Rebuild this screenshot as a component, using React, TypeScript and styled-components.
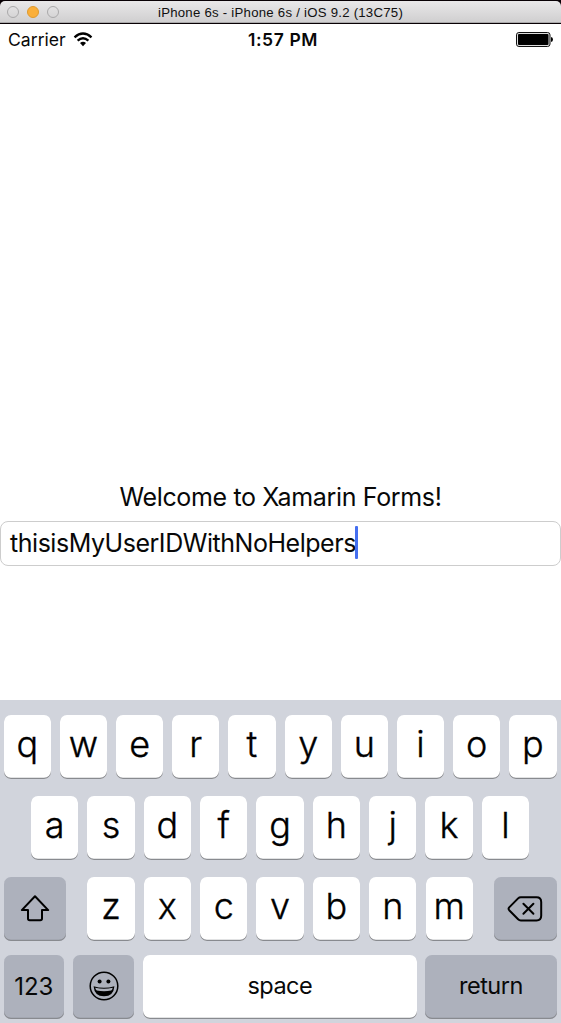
import React from 'react';
import styled, { createGlobalStyle } from 'styled-components';

const GlobalStyle = createGlobalStyle`
  * { box-sizing: border-box; }
  body { margin: 0; background: #fff; overflow: hidden; }
`;

const Simulator = styled.div`
  width: 561px;
  height: 1023px;
  display: flex;
  flex-direction: column;
  background: #fff;
  color: #080808;
  font-family: Inter, 'Liberation Sans', sans-serif;
  white-space: nowrap;
`;

const TitleFrame = styled.header`
  height: 24px;
  background: #080004;
  padding: 1px 0;
`;

const TitleBar = styled.div`
  height: 22px;
  display: grid;
  grid-template-columns: 60px 1fr 60px;
  align-items: center;
  border-radius: 5px 5px 0 0;
  background: linear-gradient(#e9e8e9, #d0cfd0);
  border-bottom: 1px solid #aaa9aa;
`;

const Lights = styled.div`
  display: flex;
  gap: 8px;
  padding-left: 7px;
`;

const Light = styled.span<{ $on?: boolean }>`
  flex: none;
  width: 12px;
  height: 12px;
  border-radius: 50%;
  border: 1px solid ${(p) => (p.$on ? '#df9a2e' : '#aaa9aa')};
  background: ${(p) => (p.$on ? '#faaf3a' : 'transparent')};
`;

const WindowTitle = styled.span`
  text-align: center;
  font-family: 'Liberation Sans', sans-serif;
  font-size: 13.2px;
  line-height: 21px;
  letter-spacing: 0.25px;
  padding-top: 1px;
  color: #101010;
`;

const StatusBar = styled.div`
  height: 32px;
  display: grid;
  grid-template-columns: 1fr auto 1fr;
  align-items: center;
  padding: 0 8px;
`;

const Network = styled.div`
  display: flex;
  align-items: center;
  gap: 7px;
  font-size: 17.6px;
`;

const Carrier = styled.span`
  line-height: 22px;
  padding-bottom: 0.5px;
`;

const Clock = styled.span`
  font-size: 17.5px;
  font-weight: 600;
  letter-spacing: 0.6px;
  padding: 0 0 2px 5px;
`;

const BatteryIcon = styled.svg`
  justify-self: end;
`;

const Page = styled.main`
  flex: 1;
  display: flex;
  flex-direction: column;
  justify-content: flex-end;
`;

const Welcome = styled.p`
  margin: 0;
  height: 41px;
  line-height: 34px;
  font-size: 25px;
  letter-spacing: -0.35px;
  text-align: center;
`;

const Field = styled.div`
  height: 45px;
  flex: none;
  margin-bottom: 134px;
  display: flex;
  align-items: center;
  padding: 0 9px 3px;
  border: 1px solid #cdcdcd;
  border-radius: 8px;
  font-size: 25px;
  letter-spacing: -0.46px;
`;

const FieldText = styled.span`
  padding-top: 1px;
`;

const Caret = styled.span`
  width: 3px;
  height: 33px;
  margin-left: -0.6px;
  background: #456ff0;
  border-radius: 1px;
`;

const Keyboard = styled.section`
  height: 323px;
  flex: none;
  background: #d1d4dc;
  padding: 15px 4.4px 0 3.6px;
`;

const KeyRow = styled.div<{ $inset?: number; $after?: number }>`
  display: flex;
  justify-content: space-between;
  padding: 0 ${(p) => p.$inset ?? 0}px;
  margin-bottom: ${(p) => p.$after ?? 17}px;
`;

const LetterGroup = styled.div`
  width: 385.5px;
  display: flex;
  justify-content: space-between;
`;

const Key = styled.div<{ $width?: number; $dark?: boolean }>`
  width: ${(p) => p.$width ?? 47.3}px;
  height: 64px;
  display: flex;
  align-items: center;
  justify-content: center;
  border-radius: 7px;
  background: ${(p) => (p.$dark ? '#adb1bc' : '#fff')};
  box-shadow: inset 0 -1.3px 0 #888a8f;
`;

const Letter = styled.span`
  font-size: 36px;
  font-weight: 300;
  -webkit-text-stroke: 0.35px #000;
  line-height: 44px;
  padding-bottom: 7px;
  color: #000;
`;

const Label = styled.span<{ $tight?: boolean }>`
  font-size: ${(p) => (p.$tight ? 23.5 : 24)}px;
  letter-spacing: ${(p) => (p.$tight ? -0.5 : 0)}px;
  line-height: 30px;
  padding-bottom: ${(p) => (p.$tight ? 2 : 0)}px;
`;

const Letters = ({ text }: { text: string }) => (
  <>
    {text.split('').map((c) => (
      <Key key={c}>
        <Letter>{c}</Letter>
      </Key>
    ))}
  </>
);

const Wifi = () => (
  <svg width="20" height="16" viewBox="0 0 20 16" fill="none" stroke="#000" strokeWidth="2.3">
    <path d="M1.5 5.3Q10-2.2 18.5 5.3" />
    <path d="M4.6 8.7Q10 3.9 15.4 8.7" />
    <path d="M7 11.1Q10 8.4 13 11.1L10 14.2Z" fill="#000" stroke="none" />
  </svg>
);

const Battery = () => (
  <BatteryIcon width="37" height="16" viewBox="0 0 37 16">
    <rect x="0.5" y="0.5" width="33.5" height="14" rx="2.4" fill="#ddd" stroke="#111" />
    <rect x="2" y="2" width="30.5" height="11" rx="1" fill="#000" />
    <path d="M35 5Q37 5.4 37 7.5T35 10Z" fill="#000" />
  </BatteryIcon>
);

const Shift = () => (
  <svg width="30" height="28" viewBox="0 0 30 28" fill="none" stroke="#000" strokeWidth="2" strokeLinejoin="round">
    <path d="M15 1.2L28.2 15.1H22V23.5Q22 25.2 20.3 25.2H9.7Q8 25.2 8 23.5V15.1H1.8Z" />
  </svg>
);

const Backspace = () => (
  <svg width="36" height="27" viewBox="0 0 36 27" fill="none" stroke="#000" strokeWidth="2" strokeLinejoin="round" strokeLinecap="round">
    <path d="M13.8 1.2H29.5Q34.2 1.2 34.2 5.9V19.8Q34.2 24.5 29.5 24.5H13.8Q12.3 24.5 11.1 23.3L2.2 14.2Q1 12.8 2.2 11.4L11.1 2.4Q12.3 1.2 13.8 1.2Z" />
    <path d="M16.4 7.8L26.4 17.8M26.4 7.8L16.4 17.8" />
  </svg>
);

const Smiley = () => (
  <svg width="30" height="32" viewBox="0 0 30 32" fill="none" stroke="#000">
    <circle cx="15" cy="15" r="13.8" strokeWidth="1.5" />
    <circle cx="10.6" cy="10.6" r="2" fill="#000" stroke="none" />
    <circle cx="19.4" cy="10.6" r="2" fill="#000" stroke="none" />
    <path d="M4.6 15.2Q15 18.2 25.4 15.2Q24.6 25.3 15 25.3T4.6 15.2Z" fill="#000" stroke="none" />
    <path d="M6.2 16.7Q15 19 23.8 16.7Q23.3 18.7 22.2 19.6Q15 21 7.8 19.6Q6.7 18.7 6.2 16.7Z" fill="#adb1bc" stroke="none" />
  </svg>
);

export default function App() {
  return (
    <Simulator>
      <GlobalStyle />
      <TitleFrame>
        <TitleBar>
          <Lights>
            <Light />
            <Light $on />
            <Light />
          </Lights>
          <WindowTitle>iPhone 6s - iPhone 6s / iOS 9.2 (13C75)</WindowTitle>
        </TitleBar>
      </TitleFrame>
      <StatusBar>
        <Network>
          <Carrier>Carrier</Carrier>
          <Wifi />
        </Network>
        <Clock>1:57 PM</Clock>
        <Battery />
      </StatusBar>
      <Page>
        <Welcome>Welcome to Xamarin Forms!</Welcome>
        <Field>
          <FieldText>thisisMyUserIDWithNoHelpers</FieldText>
          <Caret />
        </Field>
      </Page>
      <Keyboard>
        <KeyRow>
          <Letters text="qwertyuiop" />
        </KeyRow>
        <KeyRow $inset={27.5}>
          <Letters text="asdfghjkl" />
        </KeyRow>
        <KeyRow $after={14}>
          <Key $width={62.8} $dark>
            <Shift />
          </Key>
          <LetterGroup>
            <Letters text="zxcvbnm" />
          </LetterGroup>
          <Key $width={62.8} $dark>
            <Backspace />
          </Key>
        </KeyRow>
        <KeyRow>
          <Key $width={60.5} $dark>
            <Label>123</Label>
          </Key>
          <Key $width={61.5} $dark>
            <Smiley />
          </Key>
          <Key $width={273.5}>
            <Label $tight>space</Label>
          </Key>
          <Key $width={131.3} $dark>
            <Label $tight>return</Label>
          </Key>
        </KeyRow>
      </Keyboard>
    </Simulator>
  );
}
